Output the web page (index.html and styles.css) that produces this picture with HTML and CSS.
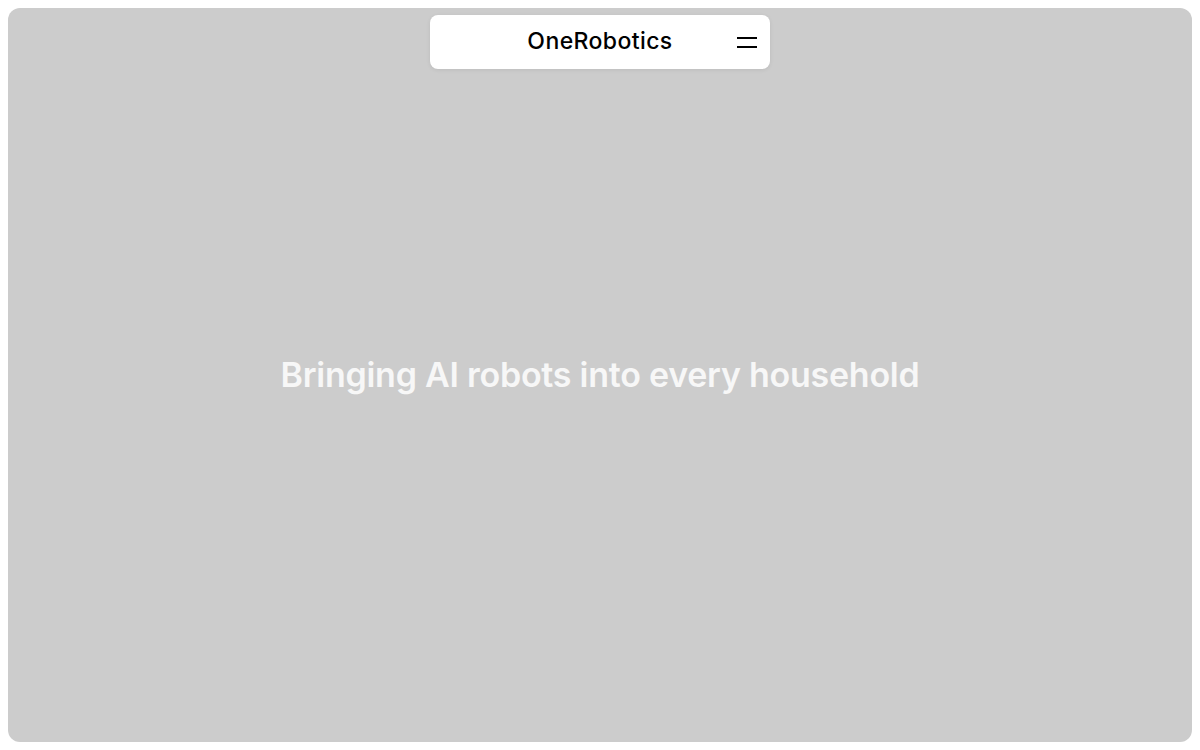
FILE: index.html
```html
<!DOCTYPE html>
<html lang="en">
<head>
<meta charset="utf-8">
<title>OneRobotics</title>
<link rel="stylesheet" href="styles.css">
</head>
<body>
<main class="hero">
  <nav class="nav">
    <span class="brand">OneRobotics</span>
    <button class="menu" aria-label="Menu">
      <svg width="20" height="12" viewBox="0 0 20 12"><rect x="0" y="1" width="20" height="2" fill="#000"/><rect x="0" y="10" width="20" height="2" fill="#000"/></svg>
    </button>
  </nav>
  <h1 class="title">Bringing AI robots into every household</h1>
</main>
</body>
</html>
```
FILE: styles.css
```css
html, body { margin: 0; padding: 0; background: #fff; }
body { padding: 8px; height: 750px; box-sizing: border-box; }
.hero {
  position: relative;
  height: 734px;
  background: #cccccc;
  border-radius: 12px;
  display: flex;
  align-items: center;
  justify-content: center;
}
.nav {
  position: absolute;
  top: 7px;
  left: 50%;
  transform: translateX(-50%);
  width: 340px;
  height: 54px;
  background: #fff;
  border-radius: 8px;
  box-shadow: 0 1px 4px rgba(0,0,0,0.08);
  display: flex;
  align-items: center;
  justify-content: center;
}
.brand {
  font-family: "Inter", "Liberation Sans", sans-serif;
  font-size: 23px;
  font-weight: 500;
  letter-spacing: 0.4px;
  color: #000;
  margin-top: -2px;
}
.menu {
  position: absolute;
  right: 13px;
  top: 21px;
  border: 0;
  background: none;
  padding: 0;
  display: flex;
}
.title {
  margin: 0 0 2px;
  font-family: "Inter", "Liberation Sans", sans-serif;
  font-size: 34px;
  font-weight: 600;
  letter-spacing: -0.25px;
  color: #f7f7f7;
}
```
